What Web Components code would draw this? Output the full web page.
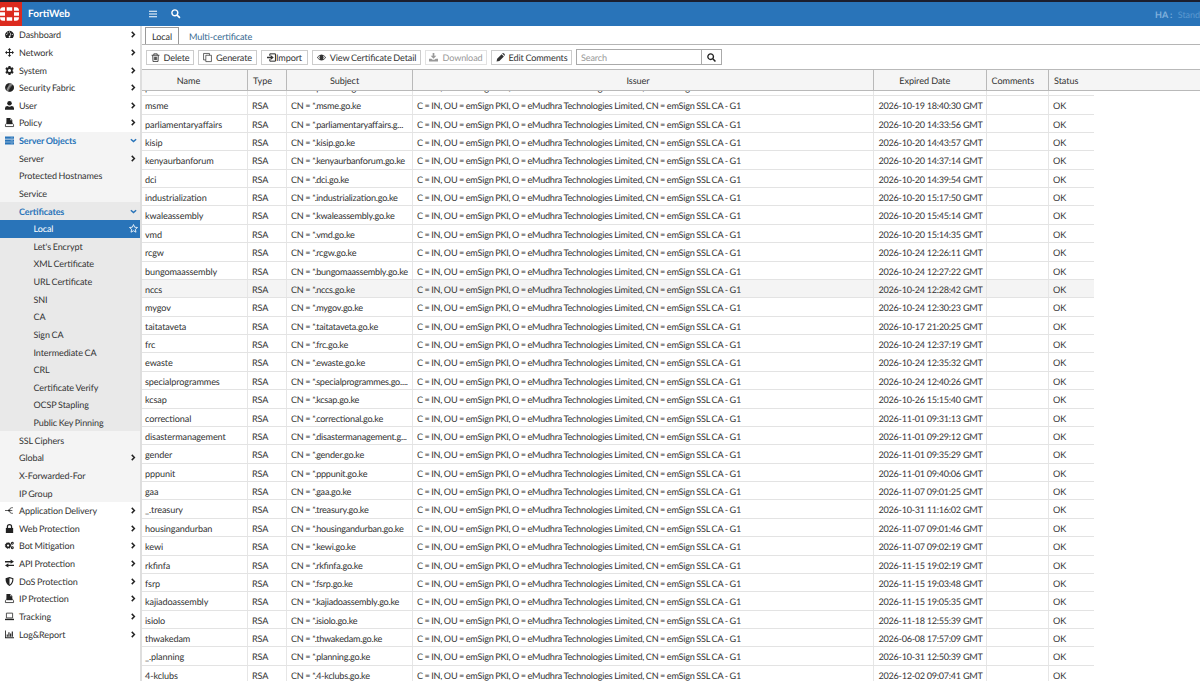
<!DOCTYPE html>
<html lang="en">
<head>
<meta charset="utf-8">
<title>FortiWeb</title>
<style>
    html, body {
        margin: 0;
        height: 100%;
        overflow: hidden;
        background: #fff;
        font-family: Lato, "Liberation Sans", sans-serif;
        font-size: 9.1px;
        color: #333;
        text-rendering: geometricPrecision;
        font-feature-settings: "liga" 1, "kern" 1;
    }
</style>
</head>
<body>
<forti-app></forti-app>

<script>
const ICONS = {
    dashboard: '<path fill-rule="evenodd" d="M2.2 14A7.5 7.5 0 1 1 13.8 14ZM6.7 11.5a1.6 1.6 0 1 0 2.7-.5L11 5l-1-.3L8.2 10a1.6 1.6 0 0 0-1.5 1.500ZM2 9h2V7.400H2ZM12 9h2V7.400h-2ZM4 6h1.700V4.300H4ZM7.200 4.500h1.600V2.800H7.200Z"/>',
    network: '<path d="M8 0l3 3.500H9V7h3.500V5L16 8l-3.500 3V9H9v3.500h2L8 16l-3-3.500h2V9H3.500v2L0 8l3.500-3v2H7V3.500H5Z"/>',
    system: '<path fill-rule="evenodd" d="M6.300 0h3.400l.4 2.300 1.400.8L13.700 2.300l1.700 2.900-1.800 1.500v2.600l1.800 1.500-1.700 2.900-2.200-.8-1.400.8-.4 2.300H6.300l-.4-2.300-1.400-.8-2.200.8L.6 10.800l1.800-1.500V6.700L.6 5.200l1.700-2.900 2.200.8 1.400-.8ZM8 5.200a2.800 2.800 0 1 0 0 5.600 2.800 2.800 0 0 0 0-5.600Z"/>',
    fabric: '<circle cx="8" cy="8" r="7.800" fill="#666"/><path d="M3 13.500A7.500 7.500 0 0 1 3 2.400L8 .5 5 7l-2 2ZM6 15L9 9l5-6a7.500 7.500 0 0 1-4 12.300Z"/><path d="M4 13L8 5l4-3" fill="none" stroke="#ddd" stroke-width=".8"/>',
    user: '<circle cx="8" cy="4.200" r="4"/><path d="M0 15.500V13q0-4 4.500-4Q8 11 11.500 9 16 9 16 13v2.500Z"/>',
    policy: '<path d="M2.500 0h7L13 3.500V9H2.500Z"/><path fill="none" stroke="#222" stroke-width="1.400" d="M3 9L.8 12v3.200h14.400V12L13 9"/><path d="M9 0v4h4Z" fill="#aaa"/><path d="M3 8h10v3H3Z"/>',
    server: '<path d="M0 1h16v4H0ZM0 6h16v4H0ZM0 11h16v4H0Z"/><path d="M10 3h4M10 8h4M10 13h4" stroke="#9cc4e6" stroke-width=".8"/>',
    delivery: '<g fill="none" stroke="#333" stroke-width="1.400"><path d="M0 8h8M14 3h-2Q8 3 8 8t4 5h2M8 8h5"/></g><circle cx="7" cy="8" r="1.800"/>',
    lock: '<path d="M1.500 7h13v9h-13Z"/><path fill="none" stroke="#222" stroke-width="2.200" d="M4.300 8V5a3.700 3.700 0 0 1 7.400 0v3"/>',
    bot: '<circle cx="5.500" cy="8" r="3.500" fill="none" stroke="#222" stroke-width="3"/><circle cx="5.500" cy="8" r="5" fill="none" stroke="#222" stroke-width="1.600" stroke-dasharray="2 1.930"/><circle cx="13" cy="4" r="1.700" fill="none" stroke="#222" stroke-width="1.900"/><circle cx="13" cy="12" r="1.700" fill="none" stroke="#222" stroke-width="1.900"/>',
    api: '<path d="M0 3.500h10V.8L16 4.700l-6 3.900V6H0ZM16 10H6V7.500l-6 3.900 6 3.900v-2.800h10Z"/>',
    shield: '<path fill-rule="evenodd" d="M8 0l7 2.200Q15.500 12 8 16 .5 12 1 2.200ZM8 2v11.800Q13.200 10.500 13 3.700Z"/>',
    laptop: '<path fill="none" stroke="#333" stroke-width="1.500" d="M2.500 2h11v8.500h-11Z"/><path d="M0 12h16v2.500H0Z"/>',
    chart: '<path d="M0 1h1.500v12H16v1.500H0ZM3 8h2v4H3ZM6 4h2v8H6ZM9 6h2v6H9ZM12 2.500h2V12h-2Z"/>',
    right: '<path fill="none" stroke="#222" stroke-width="3.400" d="M4 2l6 6-6 6"/>',
    down: '<path fill="none" stroke="currentColor" stroke-width="3.400" d="M2 5l6 5.500L14 5"/>',
    star: '<path fill="none" stroke="#fff" stroke-width="1.500" stroke-linejoin="round" d="M8 1l2.100 4.700 5 .5-3.800 3.400 1.100 5L8 12l-4.400 2.600 1.100-5L.9 6.200l5-.5Z"/>',
    trash: '<path fill="none" stroke="#333" stroke-width="1.500" d="M1 4h14M5 4V1.500h6V4M3 4l.5 11h9L13 4M6 6.500v6M8 6.500v6M10 6.500v6"/>',
    copy: '<path fill="none" stroke="#333" stroke-width="1.300" d="M5 4h10v11.300H5ZM11.500 4V.8H1v11.500h4"/>',
    import: '<path fill="none" stroke="#222" stroke-width="1.700" d="M5 5V1.500h10v13H5V11"/><path d="M0 6.800h6.500V3.500L12 8l-5.500 4.500V9.200H0Z"/>',
    eye: '<path fill-rule="evenodd" d="M0 8Q3.500 2.700 8 2.700T16 8q-3.500 5.300-8 5.300T0 8ZM1.700 8q1.500 2.500 3.800 3.400Q2.800 8 5.500 4.600 3.200 5.500 1.700 8ZM14.300 8q-1.500-2.500-3.800-3.400Q13.200 8 10.500 11.400 12.800 10.500 14.300 8Z"/>',
    download: '<path d="M6.500 0h3v5H13L8 10 3 5h3.500Z"/><path d="M0 10h4l2.500 2h3L12 10h4v5H0Z"/>',
    pencil: '<path d="M1 15l1-5L10 2l4 4-8 8ZM11 1l1-1q1.500 0 2.500 1T16 4l-1 1Z"/>',
    search: '<circle cx="6.500" cy="6.500" r="5" fill="none" stroke="currentColor" stroke-width="2.400"/><path d="M10.300 10.300l4.700 4.700" stroke="currentColor" stroke-width="2.800"/>',
    bars: '<path d="M0 2.500h16M0 8h16M0 13.500h16" stroke="currentColor" stroke-width="2.200"/>'
};

const MENU = [
    ['Dashboard', 'dashboard', 'right'],
    ['Network', 'network', 'right'],
    ['System', 'system', 'right'],
    ['Security Fabric', 'fabric', 'right'],
    ['User', 'user', 'right'],
    ['Policy', 'policy', 'right'],
    ['Server Objects', 'server', 'down', 'group open'],
    ['Server', '', 'right', 'group'],
    ['Protected Hostnames', '', '', 'group'],
    ['Service', '', '', 'group'],
    ['Certificates', '', 'down', 'sub open'],
    ['Local', '', 'star', 'sub deep active'],
    ["Let's Encrypt", '', '', 'sub deep'],
    ['XML Certificate', '', '', 'sub deep'],
    ['URL Certificate', '', '', 'sub deep'],
    ['SNI', '', '', 'sub deep'],
    ['CA', '', '', 'sub deep'],
    ['Sign CA', '', '', 'sub deep'],
    ['Intermediate CA', '', '', 'sub deep'],
    ['CRL', '', '', 'sub deep'],
    ['Certificate Verify', '', '', 'sub deep'],
    ['OCSP Stapling', '', '', 'sub deep'],
    ['Public Key Pinning', '', '', 'sub deep'],
    ['SSL Ciphers', '', '', 'group'],
    ['Global', '', 'right', 'group'],
    ['X-Forwarded-For', '', '', 'group'],
    ['IP Group', '', '', 'group'],
    ['Application Delivery', 'delivery', 'right'],
    ['Web Protection', 'lock', 'right'],
    ['Bot Mitigation', 'bot', 'right'],
    ['API Protection', 'api', 'right'],
    ['DoS Protection', 'shield', 'right'],
    ['IP Protection', 'policy', 'right'],
    ['Tracking', 'laptop', 'right'],
    ['Log&amp;Report', 'chart', 'right']
];

const ISSUER = 'C = IN, OU = emSign PKI, O = eMudhra Technologies Limited, CN = emSign SSL CA - G1';

// name, expiry
const CERTS = [
    ['pensions', '2026-10-19 18:38:12'],
    ['msme', '2026-10-19 18:40:30'],
    ['parliamentaryaffairs', '2026-10-20 14:33:56'],
    ['kisip', '2026-10-20 14:43:57'],
    ['kenyaurbanforum', '2026-10-20 14:37:14'],
    ['dci', '2026-10-20 14:39:54'],
    ['industrialization', '2026-10-20 15:17:50'],
    ['kwaleassembly', '2026-10-20 15:45:14'],
    ['vmd', '2026-10-20 15:14:35'],
    ['rcgw', '2026-10-24 12:26:11'],
    ['bungomaassembly', '2026-10-24 12:27:22'],
    ['nccs', '2026-10-24 12:28:42'],
    ['mygov', '2026-10-24 12:30:23'],
    ['taitataveta', '2026-10-17 21:20:25'],
    ['frc', '2026-10-24 12:37:19'],
    ['ewaste', '2026-10-24 12:35:32'],
    ['specialprogrammes', '2026-10-24 12:40:26'],
    ['kcsap', '2026-10-26 15:15:40'],
    ['correctional', '2026-11-01 09:31:13'],
    ['disastermanagement', '2026-11-01 09:29:12'],
    ['gender', '2026-11-01 09:35:29'],
    ['pppunit', '2026-11-01 09:40:06'],
    ['gaa', '2026-11-07 09:01:25'],
    ['_.treasury', '2026-10-31 11:16:02'],
    ['housingandurban', '2026-11-07 09:01:46'],
    ['kewi', '2026-11-07 09:02:19'],
    ['rkfinfa', '2026-11-15 19:02:19'],
    ['fsrp', '2026-11-15 19:03:48'],
    ['kajiadoassembly', '2026-11-15 19:05:35'],
    ['isiolo', '2026-11-18 12:55:39'],
    ['thwakedam', '2026-06-08 17:57:09'],
    ['_.planning', '2026-10-31 12:50:39'],
    ['4-kclubs', '2026-12-02 09:07:41']
];

// subjects too long for their column
const CUT = {
    parliamentaryaffairs: 'parliamentaryaffairs.g...',
    specialprogrammes: 'specialprogrammes.go....',
    disastermanagement: 'disastermanagement.g...'
};

class FortiIcon extends HTMLElement {
    constructor () {
        super();
        this.attachShadow({ mode: 'open' });
    }

    connectedCallback() {
        this.shadowRoot.innerHTML = `
            <style>
                :host { display: block; flex: none; width: var(--size, 9px); height: var(--size, 9px); }
                svg { display: block; width: 100%; height: 100%; fill: currentColor; overflow: visible; }
            </style>
            <svg viewBox="0 0 16 16">${ICONS[this.getAttribute('name')]}</svg>
        `;
    }
}
customElements.define('forti-icon', FortiIcon);

class FortiTopbar extends HTMLElement {
    constructor () {
        super();
        this.attachShadow({ mode: 'open' }).innerHTML = `
            <style>
                :host {
                    display: flex;
                    align-items: center;
                    box-sizing: border-box;
                    height: 26px;
                    border-top: 2px solid #1b1e2e;
                    background: #2974b9;
                    color: #fff;
                    overflow: hidden;
                    white-space: nowrap;
                }
                .logo { flex: none; width: 22px; height: 24px; }
                .brand { width: 121px; margin-left: 6px; padding-top: 1px; font-size: 10px; line-height: 23px; }
                forti-icon { margin-right: 14px; color: #fff; }
                .ha { margin-left: auto; width: 45px; padding-top: 1px; color: #7fb0dc; font-size: 9px; }
                .ha span { margin-left: 3px; color: #5b99d0; }
            </style>
            <svg class="logo" viewBox="0 0 22 24">
                <path fill="#dc2a1e" d="M0 0h22v24H0Z"/>
                <path fill="#fff" d="M6.700 5.200h5.500v3.600H6.700ZM6.700 15.200h5.500v3.600H6.700ZM0 10.200h5v3.600H0ZM14 10.200h5v3.600h-5ZM0 8.800q0-3.600 3-3.600h2v3.600ZM14 5.200h2q3 0 3 3.600h-5ZM0 15.200h5v3.600H3q-3 0-3-3.600ZM14 15.200h5q0 3.600-3 3.600h-2Z"/>
            </svg>
            <b class="brand">FortiWeb</b>
            <forti-icon name="bars" style="--size: 8px"></forti-icon>
            <forti-icon name="search" style="--size: 9.500px"></forti-icon>
            <div class="ha"><b>HA :</b> <span>Standalone</span></div>
        `;
    }
}
customElements.define('forti-topbar', FortiTopbar);

class FortiMenuItem extends HTMLElement {
    constructor () {
        super();
        this.attachShadow({ mode: 'open' });
    }

    connectedCallback() {
        const icon = this.getAttribute('icon');
        const end = this.getAttribute('end');
        this.shadowRoot.innerHTML = `
            <style>
                :host {
                    display: flex;
                    align-items: center;
                    box-sizing: border-box;
                    height: 17.64px;
                    padding: 0 2px 0 5px;
                    white-space: nowrap;
                }
                :host(.group) { background: #f4f4f4; }
                :host(.sub) { background: #e9e9e9; }
                :host(.open) { color: #2974b9; font-weight: bold; }
                :host(.active) { background: #2974b9; color: #fff; }
                .lead { width: 14px; color: #222; }
                :host(.open) .lead { color: #2974b9; }
                :host(.deep) .lead { width: 28.500px; }
                .label { flex: 1; }
                .end { --size: 7px; margin-right: 1px; }
                .star { --size: 9px; margin-right: 0; }
            </style>
            <div class="lead">${icon ? `<forti-icon name="${icon}"></forti-icon>` : ''}</div>
            <div class="label"><slot></slot></div>
            ${end ? `<forti-icon class="end ${end}" name="${end}"></forti-icon>` : ''}
        `;
    }
}
customElements.define('forti-menu-item', FortiMenuItem);

class FortiSidebar extends HTMLElement {
    constructor () {
        super();
        this.attachShadow({ mode: 'open' }).innerHTML = `
            <style>
                :host {
                    display: block;
                    box-sizing: border-box;
                    width: 142px;
                    border-right: 2px solid #dedede;
                    font-size: 9px;
                    letter-spacing: -.09px;
                    word-spacing: -.500px;
                }
            </style>
            ${MENU.map(([label, icon, end, cls]) =>
                `<forti-menu-item class="${cls || ''}" icon="${icon}" end="${end}">${label}</forti-menu-item>`).join('')}
        `;
    }
}
customElements.define('forti-sidebar', FortiSidebar);

class FortiTabs extends HTMLElement {
    constructor () {
        super();
        this.attachShadow({ mode: 'open' }).innerHTML = `
            <style>
                :host {
                    display: flex;
                    align-items: flex-end;
                    box-sizing: border-box;
                    height: 19px;
                    padding-left: 3px;
                    border-bottom: 1px solid #b5b5b5;
                    letter-spacing: -.1px;
                }
                div { height: 17px; padding: 0 10px; line-height: 19px; color: #34678f; }
                .on {
                    box-sizing: border-box;
                    padding: 0 6px;
                    border: 1px solid #999;
                    border-bottom: 0;
                    line-height: 17px;
                    color: #333;
                }
            </style>
            <div class="on">Local</div>
            <div>Multi-certificate</div>
        `;
    }
}
customElements.define('forti-tabs', FortiTabs);

class FortiButton extends HTMLElement {
    constructor () {
        super();
        this.attachShadow({ mode: 'open' });
    }

    connectedCallback() {
        this.shadowRoot.innerHTML = `
            <style>
                :host {
                    display: flex;
                    align-items: center;
                    justify-content: center;
                    gap: var(--gap, 4px);
                    box-sizing: border-box;
                    height: 15px;
                    border: 1px solid #ccc;
                    background: #fff;
                    white-space: nowrap;
                }
                :host([disabled]) { color: #999; border-color: #e2e2e2; }
                span { padding-top: 1px; }
            </style>
            <forti-icon name="${this.getAttribute('icon')}"></forti-icon>
            <span><slot></slot></span>
        `;
    }
}
customElements.define('forti-button', FortiButton);

class FortiToolbar extends HTMLElement {
    constructor () {
        super();
        this.attachShadow({ mode: 'open' }).innerHTML = `
            <style>
                :host {
                    display: flex;
                    align-items: center;
                    box-sizing: border-box;
                    height: 24px;
                    padding: 0 0 0 4px;
                    letter-spacing: -.13px;
                    word-spacing: -.400px;
                }
                forti-button { flex: none; margin-right: 4px; }
                .search {
                    display: flex;
                    align-items: center;
                    box-sizing: border-box;
                    width: 146px;
                    height: 16px;
                    border: 1px solid #aaa;
                    color: #999;
                }
                .search span { flex: 1; padding-left: 4px; }
                .search div {
                    display: flex;
                    align-items: center;
                    justify-content: center;
                    width: 19px;
                    height: 14px;
                    border-left: 1px solid #aaa;
                    color: #222;
                }
            </style>
            <forti-button icon="trash" style="width: 48px">Delete</forti-button>
            <forti-button icon="copy" style="width: 59px">Generate</forti-button>
            <forti-button icon="import" style="width: 47px; --gap: 0px">Import</forti-button>
            <forti-button icon="eye" style="width: 109px">View Certificate Detail</forti-button>
            <forti-button icon="download" style="width: 62px" disabled>Download</forti-button>
            <forti-button icon="pencil" style="width: 81px">Edit Comments</forti-button>
            <div class="search"><span>Search</span><div><forti-icon name="search"></forti-icon></div></div>
        `;
    }
}
customElements.define('forti-toolbar', FortiToolbar);

class FortiTable extends HTMLElement {
    constructor () {
        super();
        const row = ([name, date]) => `
            <div class="row ${name === 'nccs' ? 'hover' : ''}">
                <div>${name}</div>
                <div>RSA</div>
                <div class="subject">CN = <i>*.</i>${CUT[name] || `${name.replace('_.', '')}.go.ke`}</div>
                <div class="issuer">${ISSUER}</div>
                <div class="date">${date} GMT</div>
                <div></div>
                <div>OK</div>
            </div>`;
        this.attachShadow({ mode: 'open' }).innerHTML = `
            <style>
                :host { display: block; }
                .head, .row {
                    display: grid;
                    grid-template-columns: 106px 39px 126px 461px 112.500px 62.500px 45px;
                }
                .head {
                    box-sizing: border-box;
                    height: 22px;
                    border-top: 1px solid #b9b9b9;
                    border-bottom: 1px solid #b9b9b9;
                    background: #f5f5f5;
                    line-height: 21px;
                    text-align: center;
                    letter-spacing: -.06px;
                }
                .head div { height: 20px; box-sizing: border-box; border-right: 1px solid #b9b9b9; }
                .head .last { border: 0; }
                .head .name { padding-right: 12px; }
                .head .type, .head .com, .head .last { text-align: left; padding-left: 5px; }
                .head .subject, .head .date, .head .issuer { padding-right: 10px; }
                .body { height: 591px; overflow: hidden; }
                .rows { margin-top: -13.200px; }
                .row {
                    box-sizing: border-box;
                    width: 952px;
                    height: 18.390px;
                    border-bottom: 1px solid #e3e3e3;
                    line-height: 19.600px;
                    white-space: nowrap;
                    letter-spacing: -.11px;
                    word-spacing: -.450px;
                }
                .row div { height: 17.390px; padding-left: 4px; border-right: 1px solid #e6e6e6; }
                .row div:first-child { padding-left: 3px; }
                .row div:last-child { border: 0; }
                .row .subject { letter-spacing: -.23px; }
                .row .issuer { letter-spacing: -.215px; }
                .row .date { padding-left: 4.500px; letter-spacing: -.27px; word-spacing: 0; }
                i { font-style: normal; letter-spacing: -.900px; }
                .hover { background: #f4f4f4; }
            </style>
            <div class="head">
                <div class="name">Name</div>
                <div class="type">Type</div>
                <div class="subject">Subject</div>
                <div class="issuer">Issuer</div>
                <div class="date">Expired Date</div>
                <div class="com">Comments</div>
                <div class="last">Status</div>
            </div>
            <div class="body"><div class="rows">${CERTS.map(row).join('')}</div></div>
        `;
    }
}
customElements.define('forti-table', FortiTable);

class FortiApp extends HTMLElement {
    constructor () {
        super();
        this.attachShadow({ mode: 'open' }).innerHTML = `
            <style>
                :host { display: flex; flex-direction: column; height: 681px; overflow: hidden; }
                forti-topbar { flex: none; }
                .content { display: flex; flex: 1; min-height: 0; }
                forti-sidebar { flex: none; }
                main { flex: 1; min-width: 0; }
            </style>
            <forti-topbar></forti-topbar>
            <div class="content">
                <forti-sidebar></forti-sidebar>
                <main>
                    <forti-tabs></forti-tabs>
                    <forti-toolbar></forti-toolbar>
                    <forti-table></forti-table>
                </main>
            </div>
        `;
    }
}
customElements.define('forti-app', FortiApp);
</script>
</body>
</html>
